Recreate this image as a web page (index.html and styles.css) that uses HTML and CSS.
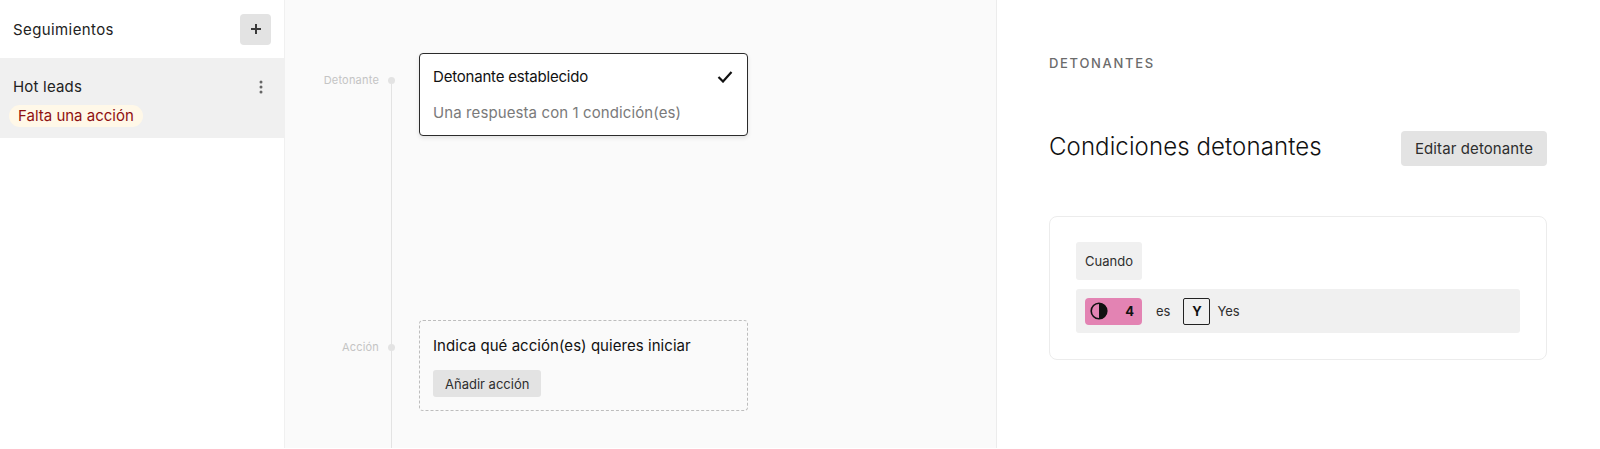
FILE: index.html
```html
<!DOCTYPE html>
<html lang="es">
<head>
<meta charset="utf-8">
<title>Seguimientos</title>
<link rel="stylesheet" href="styles.css">
</head>
<body>
<div class="app">
  <aside class="sidebar">
    <header class="side-head">
      <span class="side-title">Seguimientos</span>
      <button class="add-btn" aria-label="Añadir">
        <svg width="12" height="12" viewBox="0 0 12 12"><path d="M6 1v10M1 6h10" stroke="#3a3a3a" stroke-width="2"/></svg>
      </button>
    </header>
    <div class="lead">
      <div class="lead-top">
        <span class="lead-name">Hot leads</span>
        <svg class="kebab" width="4" height="14" viewBox="0 0 4 14"><circle cx="2" cy="2" r="1.5"/><circle cx="2" cy="7" r="1.5"/><circle cx="2" cy="12" r="1.5"/></svg>
      </div>
      <span class="lead-badge">Falta una acción</span>
    </div>
  </aside>

  <main class="flow">
    <div class="step step-trigger">
      <div class="step-label">Detonante</div>
      <div class="step-dot"></div>
      <div class="card card-solid">
        <div class="card-row">
          <span class="card-title card-title-tight">Detonante establecido</span>
          <svg width="16" height="13" viewBox="0 0 16 13"><path d="M1.5 7l4.5 4.5L14.5 2" fill="none" stroke="#111" stroke-width="2.2"/></svg>
        </div>
        <div class="card-sub">Una respuesta con 1 condición(es)</div>
      </div>
    </div>
    <div class="step step-action">
      <div class="step-label">Acción</div>
      <div class="step-dot"></div>
      <div class="card card-dashed">
        <div class="card-title card-title-wide">Indica qué acción(es) quieres iniciar</div>
        <button class="btn-small">Añadir acción</button>
      </div>
    </div>
  </main>

  <section class="detail">
    <div class="eyebrow">DETONANTES</div>
    <div class="detail-head">
      <h1 class="detail-title">Condiciones detonantes</h1>
      <button class="btn-edit">Editar detonante</button>
    </div>
    <div class="cond-card">
      <div class="when">Cuando</div>
      <div class="cond-row">
        <span class="field-chip">
          <svg width="18" height="18" viewBox="0 0 18 18"><circle cx="9" cy="9" r="7.8" fill="none" stroke="#111" stroke-width="1.6"/><path d="M9 1.2a7.8 7.8 0 0 1 0 15.6z" fill="#111"/></svg>
          <b>4</b>
        </span>
        <span class="cond-op">es</span>
        <span class="key-box">Y</span>
        <span class="cond-val">Yes</span>
      </div>
    </div>
  </section>
</div>
</body>
</html>
```

FILE: styles.css
```css
* { box-sizing: border-box; }
html, body { margin: 0; height: 100%; overflow: hidden; }
body { font-family: Inter, "Liberation Sans", sans-serif; color: #111; background: #fff; }
button { font-family: inherit; border: 0; cursor: pointer; }

.app { display: flex; height: 448px; }

.sidebar { width: 284px; flex: none; background: #fff; }
.side-head { height: 58px; padding: 0 13px 0 13px; display: flex; align-items: center; justify-content: space-between; }
.side-title { font-size: 15px; line-height: 1; letter-spacing: .4px; color: #222; }
.add-btn { width: 31px; height: 31px; border-radius: 4px; background: #e3e3e3; display: flex; align-items: center; justify-content: center; padding: 0; }
.lead { height: 80px; background: #f0f0f0; padding: 20px 21px 0 9px; }
.lead-top { display: flex; align-items: center; justify-content: space-between; padding-left: 4px; height: 17px; }
.lead-name { font-size: 15px; letter-spacing: .2px; color: #222; }
.kebab { fill: #666; }
.lead-badge { display: inline-block; margin-top: 10px; height: 22px; line-height: 22px; padding: 0 9px; border-radius: 11px; background: #fff8e8; color: #8f1010; font-size: 15px; }

.flow { width: 713px; flex: none; background: #fafafa; border-left: 1px solid #f0f0f0; border-right: 1px solid #ececec; padding-top: 53px; position: relative; }
.flow::before { content: ""; position: absolute; left: 106px; top: 84px; bottom: 0; width: 1px; background: #e3e3e3; }
.step { display: flex; align-items: flex-start; }
.step-action { margin-top: 184px; }
.step-label { width: 94px; text-align: right; font-size: 11px; line-height: 14px; letter-spacing: .2px; color: #c4c4c4; }
.step-trigger .step-label, .step-trigger .step-dot { margin-top: 20px; }
.step-action .step-label, .step-action .step-dot { margin-top: 20px; }
.step-dot { width: 7px; height: 7px; border-radius: 50%; background: #e3e3e3; margin-left: 9px; position: relative; top: 4px; }
.card { width: 329px; margin-left: 24px; border-radius: 4px; background: #fff; }
.card-solid { height: 83px; border: 1px solid #2b2b2b; padding: 14px 13px 0; box-shadow: 0 2px 4px rgba(0,0,0,.1); }
.card-row { display: flex; align-items: center; justify-content: space-between; height: 17px; padding-right: 1px; }
.card-title { font-size: 15px; line-height: 17px; color: #111; }
.card-title-tight { letter-spacing: -.2px; }
.card-title-wide { letter-spacing: .05px; }
.card-sub { font-size: 15px; line-height: 17px; letter-spacing: .1px; color: #7a7a7a; margin-top: 19px; }
.card-dashed { height: 91px; background: transparent; border: 1px dashed #bdbdbd; padding: 16px 13px 0; }
.btn-small { display: block; margin-top: 16px; height: 27px; padding: 0 12px; border-radius: 3px; background: #e3e3e3; color: #2e2e2e; font-size: 13px; }

.detail { flex: 1; padding: 56px 53px 0 52px; }
.eyebrow { font-size: 13px; font-weight: 500; line-height: 15px; letter-spacing: 1.7px; color: #6b6b6b; }
.detail-head { display: flex; align-items: center; justify-content: space-between; margin-top: 60px; height: 35px; }
.detail-title { margin: 0 0 4px; font-size: 24px; font-weight: 300; letter-spacing: .1px; color: #111; }
.btn-edit { height: 35px; width: 146px; border-radius: 4px; background: #e3e3e3; color: #2e2e2e; font-size: 15px; letter-spacing: .1px; padding: 0; }
.cond-card { margin-top: 50px; height: 144px; border: 1px solid #ececec; border-radius: 8px; padding: 25px 26px; background: #fff; }
.when { width: 66px; height: 38px; background: #f0f0f0; border-radius: 3px; font-size: 13px; color: #2e2e2e; display: flex; align-items: center; justify-content: center; }
.cond-row { margin-top: 9px; height: 44px; background: #f0f0f0; border-radius: 3px; padding: 0 9px; display: flex; align-items: center; font-size: 13px; color: #2e2e2e; }
.field-chip { width: 57px; height: 27px; border-radius: 4px; background: #e383b3; display: flex; align-items: center; justify-content: space-between; padding: 0 8px 0 5px; color: #111; }
.field-chip b { font-size: 13px; font-weight: 700; }
.cond-op { margin-left: 14px; }
.key-box { margin-left: 13px; width: 27px; height: 27px; border: 1px solid #222; border-radius: 2px; display: flex; align-items: center; justify-content: center; font-weight: 700; color: #111; }
.cond-val { margin-left: 7px; }
```
